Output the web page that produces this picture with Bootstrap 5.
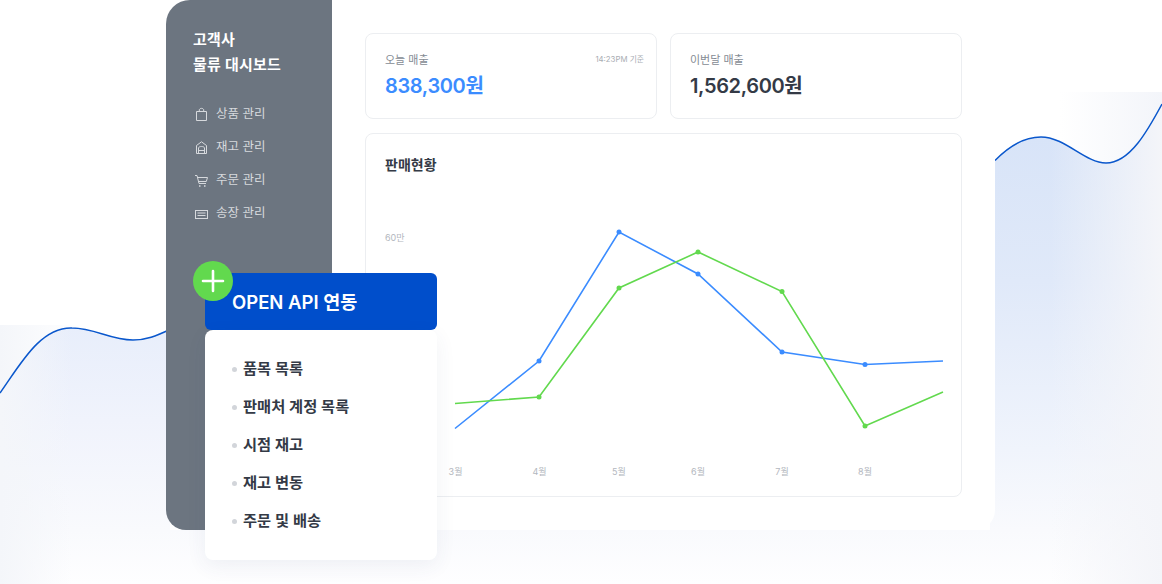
<!DOCTYPE html>
<html lang="ko">
<head>
<meta charset="UTF-8" />
<title>고객사 물류 대시보드</title>
<link href="https://cdn.jsdelivr.net/npm/bootstrap@5.3.0/dist/css/bootstrap.min.css" rel="stylesheet" />
<style>
  html, body { height: 100%; }
  body {
    margin: 0;
    background: #fff;
    overflow: hidden;
    font-family: "Inter", "Noto Sans CJK KR", sans-serif;
    color: #343a46;
  }
  .stage { position: relative; width: 1162px; height: 584px; padding-left: 166px; overflow: hidden; }
  .stage-bg { position: absolute; left: 0; top: 0; }

  .app-window {
    position: relative;
    width: 829px;
    height: 530px;
    background: #fff;
    border-radius: 24px 0 20px 20px;
  }
  .side-panel {
    width: 166px;
    flex: none;
    background: #6c7580;
    border-radius: 24px 0 0 20px;
    padding: 27px 0 0 27px;
  }
  .side-title { font-size: 15px; line-height: 25px; font-weight: 600; color: #fff; margin: 0 0 21px; letter-spacing: .2px; }
  .side-link {
    display: flex;
    align-items: center;
    gap: 7px;
    height: 33px;
    padding: 0 0 0 2px;
    font-size: 12.500px;
    color: #d6d9dd;
  }
  .side-link svg { width: 14px; height: 14px; flex: none; fill: none; stroke: #d6d9dd; stroke-width: 1; overflow: visible; }

  .main-area { flex: 1; padding: 33px; display: flex; flex-direction: column; gap: 14px; }
  .stat-row { display: flex; gap: 13px; }
  .stat-box, .chart-box { border: 1px solid #eceef1; border-radius: 8px; }
  .stat-box { flex: 1; height: 86px; padding: 17px 12px 0 19px; position: relative; }
  .stat-label { font-size: 11px; line-height: 18px; color: #858b94; }
  .stat-time { font-size: 7.800px; line-height: 16px; color: #a9adb3; }
  .stat-value { font-size: 20px; line-height: 30px; font-weight: 600; margin-top: 2px; letter-spacing: -.35px; }
  .stat-blue { color: #3b8cff; }

  .chart-box { height: 364px; position: relative; }
  .chart-title { font-size: 14px; line-height: 20px; font-weight: 600; padding: 21px 0 0 19px; margin: 0; }
  .chart-svg { position: absolute; left: -1px; top: -1px; }
  .chart-svg text { font-size: 9px; fill: #b3b7be; font-family: "Inter", "Noto Sans CJK KR", sans-serif; }

  .api-menu { position: absolute; left: 205px; top: 273px; width: 232px; }
  .api-head {
    height: 57px;
    background: #004ecb;
    border-radius: 6px;
    color: #fff;
    font-size: 18.500px;
    font-weight: 600;
    padding: 16px 0 0 27px;
    line-height: 27px;
  }
  .api-plus {
    position: absolute;
    left: -12px;
    top: -12px;
    width: 40px;
    height: 40px;
    border-radius: 50%;
    background: #62d94e;
  }
  .api-plus svg { display: block; }
  .api-list {
    height: 230px;
    background: #fff;
    border-radius: 8px;
    box-shadow: 0 6px 20px rgba(60, 75, 110, .07);
    padding: 20px 0 0 27px;
    margin: 0;
    list-style: none;
  }
  .api-list li {
    height: 38px;
    display: flex;
    align-items: center;
    gap: 6px;
    font-size: 15.300px;
    font-weight: 600;
    color: #343a46;
  }
  .api-list li::before {
    content: "";
    width: 5px;
    height: 5px;
    border-radius: 50%;
    background: #d2d5da;
    flex: none;
  }
</style>
</head>
<body>
<div class="stage">
  <!-- background waves -->
  <svg class="stage-bg" width="1162" height="584" viewBox="0 0 1162 584">
    <defs>
      <linearGradient id="leftGray" x1="0" y1="0" x2="1" y2="0">
        <stop offset="0" stop-color="#f4f6fa" />
        <stop offset=".5" stop-color="#fff" />
      </linearGradient>
      <linearGradient id="leftFill" gradientUnits="userSpaceOnUse" x1="0" y1="328" x2="0" y2="584">
        <stop offset="0" stop-color="#e8eefb" />
        <stop offset=".36" stop-color="#f0f3fc" />
        <stop offset=".79" stop-color="#f9fafd" />
        <stop offset="1" stop-color="#fefeff" />
      </linearGradient>
      <linearGradient id="leftEdge" x1="0" y1="0" x2="1" y2="0">
        <stop offset="0" stop-color="#f4f6fa" />
        <stop offset="1" stop-color="#f4f6fa" stop-opacity="0" />
      </linearGradient>
      <linearGradient id="rightGray" x1="0" y1="0" x2="1" y2="0">
        <stop offset="0" stop-color="#fff" />
        <stop offset="1" stop-color="#f3f5fa" />
      </linearGradient>
      <linearGradient id="rightFill" gradientUnits="userSpaceOnUse" x1="0" y1="104" x2="0" y2="584">
        <stop offset=".07" stop-color="#d8e4f8" />
        <stop offset=".37" stop-color="#e0e9f9" />
        <stop offset=".72" stop-color="#f0f4fc" />
        <stop offset=".8875" stop-color="#f9fafd" />
        <stop offset="1" stop-color="#fefeff" />
      </linearGradient>
      <linearGradient id="rightEdge" x1="0" y1="0" x2="1" y2="0">
        <stop offset="0" stop-color="#f4f5f9" stop-opacity="0" />
        <stop offset="1" stop-color="#f4f5f9" />
      </linearGradient>
      <linearGradient id="bottomFill" x1="0" y1="0" x2="0" y2="1">
        <stop offset="0" stop-color="#f9fafd" />
        <stop offset="1" stop-color="#fefeff" />
      </linearGradient>
      <clipPath id="leftClip">
        <path d="M0 393C20 365 40 327 72 328V584H0Z" />
      </clipPath>
      <clipPath id="rightClip">
        <path d="M990 165C1010 145 1025 137 1041 137C1065 137 1085 163 1106 163C1130 163 1148 130 1162 104V584H990Z" />
      </clipPath>
    </defs>
    <rect x="0" y="325" width="170" height="259" fill="url(#leftGray)" />
    <path d="M0 393C20 365 40 327 72 328C95 328 110 340 133 340C146 340 156 336 170 329.500V584H0Z" fill="url(#leftFill)" />
    <rect x="0" y="325" width="72" height="259" fill="url(#leftEdge)" clip-path="url(#leftClip)" />
    <rect x="166" y="530" width="830" height="54" fill="url(#bottomFill)" />
    <rect x="1060" y="92" width="102" height="110" fill="url(#rightGray)" />
    <path d="M990 165C1010 145 1025 137 1041 137C1065 137 1085 163 1106 163C1130 163 1148 130 1162 104V584H990Z" fill="url(#rightFill)" />
    <rect x="1050" y="100" width="112" height="484" fill="url(#rightEdge)" clip-path="url(#rightClip)" />
    <path d="M0 393C20 365 40 327 72 328C95 328 110 340 133 340C146 340 156 336 170 329.500" fill="none" stroke="#0a57cc" stroke-width="1.500" />
    <path d="M995 160.500C1010 145 1025 137 1041 137C1065 137 1085 163 1106 163C1130 163 1148 130 1162 104" fill="none" stroke="#0a57cc" stroke-width="1.500" />
  </svg>

  <div class="app-window d-flex">
    <aside class="side-panel">
      <h1 class="side-title">고객사<br />물류 대시보드</h1>
      <nav>
        <a class="side-link text-decoration-none">
          <svg viewBox="0 0 14 14"><path d="M1.500 3.500H11.500V12.500H1.500Z" /><path d="M4.300 3.500V2C4.300 -.2 8.700 -.2 8.700 2V3.500" /></svg>
          상품 관리
        </a>
        <a class="side-link text-decoration-none">
          <svg viewBox="0 0 14 14"><path d="M1.500 12.500V4.500L6.500 .8L11.500 4.500V12.500Z" /><path d="M3.500 12.500V7C3.500 5 9.500 5 9.500 7V12.500M3.500 9.500H9.500" /></svg>
          재고 관리
        </a>
        <a class="side-link text-decoration-none">
          <svg viewBox="0 0 14 14"><path d="M0 1.500H2L4 9.500H11" /><path d="M2.500 3.500H12.500L11.300 7.500H3.500" /><path d="M4 12H5.500M9 12H10.500" stroke-width="1.600" /></svg>
          주문 관리
        </a>
        <a class="side-link text-decoration-none">
          <svg viewBox="0 0 14 14"><rect x=".5" y="3.500" width="12" height="8" /><path d="M2.500 6H10.500M2.500 8.500H10.500" /></svg>
          송장 관리
        </a>
      </nav>
    </aside>

    <main class="main-area">
      <div class="stat-row">
        <div class="stat-box">
          <div class="d-flex justify-content-between">
            <span class="stat-label">오늘 매출</span>
            <span class="stat-time">14:23PM 기준</span>
          </div>
          <div class="stat-value stat-blue">838,300원</div>
        </div>
        <div class="stat-box">
          <div class="stat-label">이번달 매출</div>
          <div class="stat-value">1,562,600원</div>
        </div>
      </div>

      <section class="chart-box">
        <h2 class="chart-title">판매현황</h2>
        <svg class="chart-svg" width="597" height="364" viewBox="365 133 597 364">
          <text x="385" y="241">60만</text>
          <g text-anchor="middle">
            <text x="455.500" y="475">3월</text>
            <text x="539.500" y="475">4월</text>
            <text x="619" y="475">5월</text>
            <text x="698" y="475">6월</text>
            <text x="782" y="475">7월</text>
            <text x="865" y="475">8월</text>
          </g>
          <polyline points="455,428.500 539,361 619,232 698,274 782,352 865,364.500 943,361" fill="none" stroke="#3b8cff" stroke-width="1.600" />
          <polyline points="455,403.500 539,397 619,288 698,252 782,291.500 865,426 943,392" fill="none" stroke="#62d94e" stroke-width="1.600" />
          <g fill="#3b8cff">
            <circle cx="539" cy="361" r="2.500" />
            <circle cx="619" cy="232" r="2.500" />
            <circle cx="698" cy="274" r="2.500" />
            <circle cx="782" cy="352" r="2.500" />
            <circle cx="865" cy="364.500" r="2.500" />
          </g>
          <g fill="#62d94e">
            <circle cx="539" cy="397" r="2.500" />
            <circle cx="619" cy="288" r="2.500" />
            <circle cx="698" cy="252" r="2.500" />
            <circle cx="782" cy="291.500" r="2.500" />
            <circle cx="865" cy="426" r="2.500" />
          </g>
        </svg>
      </section>
    </main>
  </div>

  <!-- floating menu over the window -->
  <div class="api-menu">
    <div class="api-head">OPEN API 연동</div>
    <span class="api-plus">
      <svg width="40" height="40" viewBox="0 0 40 40"><path d="M10 20H30M20 10V30" stroke="#fff" stroke-width="2.600" stroke-linecap="round" /></svg>
    </span>
    <ul class="api-list">
      <li>품목 목록</li>
      <li>판매처 계정 목록</li>
      <li>시점 재고</li>
      <li>재고 변동</li>
      <li>주문 및 배송</li>
    </ul>
  </div>
</div>
<script src="https://cdn.jsdelivr.net/npm/bootstrap@5.3.0/dist/js/bootstrap.bundle.min.js"></script>
</body>
</html>
